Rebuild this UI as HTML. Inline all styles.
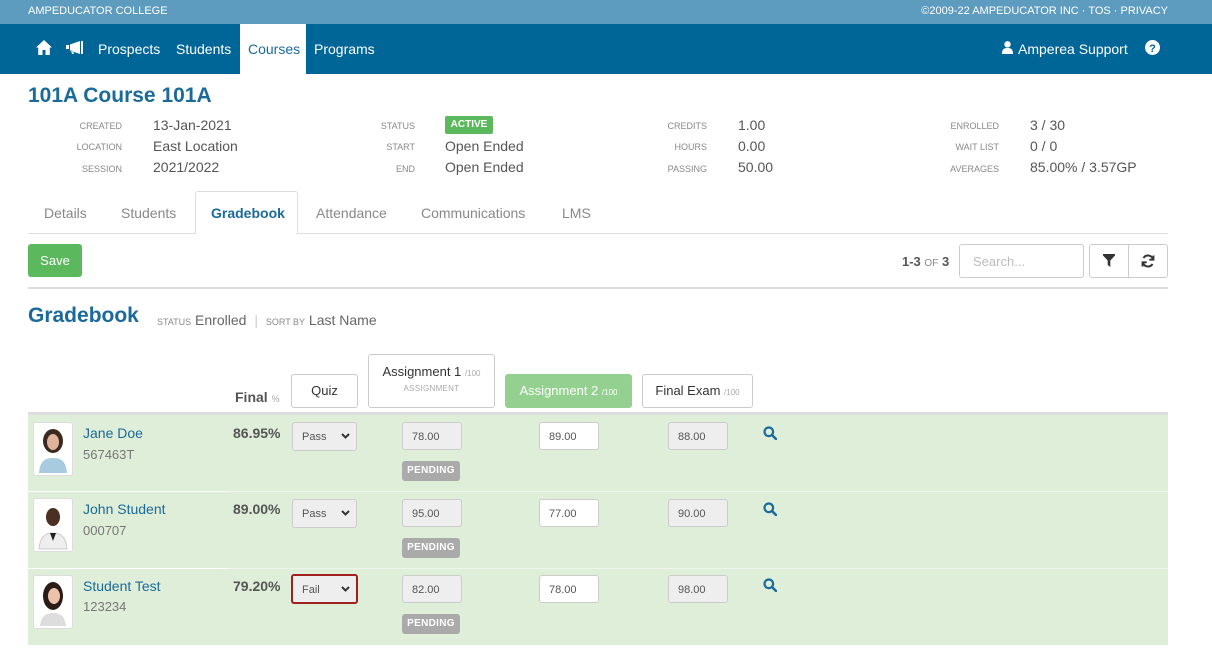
<!DOCTYPE html>
<html><head><meta charset="utf-8">
<style>
*{box-sizing:border-box;margin:0;padding:0}
body{width:1212px;height:670px;overflow:hidden;background:#fff;font-family:"Liberation Sans",sans-serif;color:#555;position:relative}
.a{position:absolute;white-space:nowrap}
.top{position:absolute;left:0;top:0;width:1212px;height:24px;background:#5d9bbf;color:#fff;font-size:11px}
.nav{position:absolute;left:0;top:24px;width:1212px;height:50px;background:#006597;color:#fff;font-size:14px}
.lbl{font-size:9px;color:#888;text-align:right;width:80px}
.val{font-size:14px;color:#555}
.tab{font-size:14px;color:#888;top:205px}
.in{position:absolute;height:28px;border:1px solid #ccc;border-radius:3px;font-size:11px;color:#555;padding:8px 0 0 9px;background:#eee}
.w{background:#fff}
.pend{position:absolute;width:58px;height:20px;background:#aaa;color:#fff;font-size:10px;font-weight:bold;text-align:center;line-height:20px;border-radius:3px;letter-spacing:.3px}
.hb{position:absolute;border:1px solid #ccc;border-radius:3px;background:#fff;font-size:13px;color:#333;text-align:center}
.av{position:absolute;left:33px;width:40px;height:54px;border:1px solid #ddd;border-radius:3px;background:#fff}
.nm{font-size:14px;color:#1a6a9a}
.id{font-size:13px;color:#777}
.fin{font-size:14px;font-weight:bold;color:#555}
.chev{position:absolute;right:6px;top:10px}
</style></head><body>
<div class="top"><span class="a" style="left:28px;top:5px">AMPEDUCATOR COLLEGE</span><span class="a" style="right:44px;top:5px">©2009-22 AMPEDUCATOR INC · TOS · PRIVACY</span></div>
<div class="nav">
<svg class="a" style="left:36px;top:16px" width="16" height="15" viewBox="0 0 16 15"><path d="M8 0L0 7.5h2.2V15h4.3v-5h3v5h4.3V7.5H16z" fill="#fff"/></svg>
<svg class="a" style="left:66px;top:17px" width="17" height="13" viewBox="0 0 17 13"><path d="M0 4h3v4H0zM4 3.5l10-3.5v13L4 9.5zM15 0h2v13h-2zM5 9.5l1 3.5h2l-1-3" fill="#fff"/></svg>
<span class="a" style="left:98px;top:17px">Prospects</span>
<span class="a" style="left:176px;top:17px">Students</span>
<div class="a" style="left:240px;top:0;width:66px;height:50px;background:#fff"></div>
<span class="a" style="left:248px;top:17px;color:#1a6a9a">Courses</span>
<span class="a" style="left:314px;top:17px">Programs</span>
<svg class="a" style="left:1002px;top:17px" width="11" height="13" viewBox="0 0 11 13"><circle cx="5.5" cy="3.3" r="3.2" fill="#fff"/><path d="M0 13c0-5 2-6 5.5-6s5.5 1 5.5 6z" fill="#fff"/></svg>
<span class="a" style="left:1018px;top:17px">Amperea Support</span>
<svg class="a" style="left:1145px;top:16px" width="15" height="15" viewBox="0 0 15 15"><circle cx="7.5" cy="7.5" r="7.5" fill="#fff"/><text x="7.5" y="12" font-size="11" font-weight="bold" fill="#006597" text-anchor="middle" font-family="Liberation Sans">?</text></svg>
</div>
<div class="a" style="left:28px;top:84px;font-size:21px;font-weight:bold;color:#1a6a9a">101A Course 101A</div>

<div class="a lbl" style="left:42px;top:121px">CREATED</div><div class="a val" style="left:153px;top:117px">13-Jan-2021</div>
<div class="a lbl" style="left:42px;top:142px">LOCATION</div><div class="a val" style="left:153px;top:138px">East Location</div>
<div class="a lbl" style="left:42px;top:164px">SESSION</div><div class="a val" style="left:153px;top:159px">2021/2022</div>

<div class="a lbl" style="left:335px;top:121px">STATUS</div><div class="a" style="left:445px;top:116px;width:48px;height:18px;background:#5cb85c;color:#fff;font-size:10px;font-weight:bold;text-align:center;line-height:18px;border-radius:2px">ACTIVE</div>
<div class="a lbl" style="left:335px;top:142px">START</div><div class="a val" style="left:445px;top:138px">Open Ended</div>
<div class="a lbl" style="left:335px;top:164px">END</div><div class="a val" style="left:445px;top:159px">Open Ended</div>

<div class="a lbl" style="left:627px;top:121px">CREDITS</div><div class="a val" style="left:738px;top:117px">1.00</div>
<div class="a lbl" style="left:627px;top:142px">HOURS</div><div class="a val" style="left:738px;top:138px">0.00</div>
<div class="a lbl" style="left:627px;top:164px">PASSING</div><div class="a val" style="left:738px;top:159px">50.00</div>

<div class="a lbl" style="left:919px;top:121px">ENROLLED</div><div class="a val" style="left:1030px;top:117px">3 / 30</div>
<div class="a lbl" style="left:919px;top:142px">WAIT LIST</div><div class="a val" style="left:1030px;top:138px">0 / 0</div>
<div class="a lbl" style="left:919px;top:164px">AVERAGES</div><div class="a val" style="left:1030px;top:159px">85.00% / 3.57GP</div>

<div class="a" style="left:28px;top:233px;width:1140px;height:1px;background:#ddd"></div>
<div class="a" style="left:195px;top:191px;width:103px;height:43px;border:1px solid #ddd;border-bottom:none;background:#fff;border-radius:3px 3px 0 0"></div>
<span class="a tab" style="left:44px">Details</span>
<span class="a tab" style="left:121px">Students</span>
<span class="a tab" style="left:211px;color:#1a6a9a;font-weight:bold">Gradebook</span>
<span class="a tab" style="left:316px">Attendance</span>
<span class="a tab" style="left:421px">Communications</span>
<span class="a tab" style="left:562px">LMS</span>

<div class="a" style="left:28px;top:244px;width:54px;height:33px;background:#5cb85c;border-radius:3px;color:#fff;font-size:13px;text-align:center;line-height:33px">Save</div>
<div class="a" style="left:902px;top:254px;font-size:13px;color:#555"><b>1-3</b> <span style="font-size:10px;color:#888">OF</span> <b>3</b></div>
<div class="a" style="left:959px;top:244px;width:125px;height:34px;border:1px solid #ccc;border-radius:3px;font-size:13px;color:#bbb;padding:9px 0 0 13px">Search...</div>
<div class="a" style="left:1089px;top:244px;width:79px;height:34px;border:1px solid #ccc;border-radius:3px"></div>
<div class="a" style="left:1128px;top:244px;width:1px;height:34px;background:#ccc"></div>
<svg class="a" style="left:1103px;top:254px" width="12" height="13" viewBox="0 0 12 13"><path d="M0 0h12v1.5L7.3 6.5V13L4.7 11V6.5L0 1.5z" fill="#333"/></svg>
<svg class="a" style="left:1141px;top:254px" width="14" height="14" viewBox="0 0 14 14" fill="none" stroke="#333" stroke-width="2"><path d="M12 5.5A5.2 5.2 0 0 0 2.5 4M2 8.5A5.2 5.2 0 0 0 11.5 10"/><path d="M12.5 1.5v4.2H8.3M1.5 12.5V8.3h4.2" stroke-width="1.8"/></svg>
<div class="a" style="left:28px;top:287px;width:1140px;height:2px;background:#ddd"></div>

<div class="a" style="left:28px;top:304px;font-size:21px;font-weight:bold;color:#1a6a9a">Gradebook</div>
<div class="a" style="left:157px;top:312px;font-size:14px;color:#666"><span style="font-size:9px;color:#888">STATUS</span> Enrolled <span style="color:#ccc;margin:0 4px">|</span> <span style="font-size:9px;color:#888">SORT BY</span> Last Name</div>

<div class="a" style="left:235px;top:389px;font-size:14px;font-weight:bold;color:#555">Final <span style="font-size:9px;color:#aaa;font-weight:normal">%</span></div>
<div class="hb" style="left:291px;top:374px;width:67px;height:34px;line-height:32px">Quiz</div>
<div class="hb" style="left:368px;top:354px;width:127px;height:54px;padding-top:9px">Assignment 1 <span style="font-size:8px;color:#aaa">/100</span><div style="font-size:8px;color:#aaa;margin-top:5px;letter-spacing:.3px">ASSIGNMENT</div></div>
<div class="hb" style="left:505px;top:374px;width:127px;height:34px;line-height:32px;background:#94d190;border-color:#94d190;color:#fff">Assignment 2 <span style="font-size:8px">/100</span></div>
<div class="hb" style="left:642px;top:374px;width:111px;height:34px;line-height:32px">Final Exam <span style="font-size:8px;color:#aaa">/100</span></div>
<div class="a" style="left:28px;top:412px;width:1140px;height:3px;background:#ddd"></div>

<div class="a" style="left:28px;top:415px;width:1140px;height:230px;background:#dfeed9"></div>
<div class="a" style="left:28px;top:491px;width:1140px;height:1px;background:#eef5ea"></div>
<div class="a" style="left:28px;top:491px;width:200px;height:1px;background:#fff"></div>
<div class="a" style="left:28px;top:568px;width:1140px;height:1px;background:#eef5ea"></div>
<div class="a" style="left:28px;top:568px;width:200px;height:1px;background:#fff"></div>

<div class="av" style="top:422px"><svg width="38" height="52" viewBox="0 0 38 52"><ellipse cx="19" cy="18" rx="10" ry="12" fill="#3a2a20"/><ellipse cx="19" cy="19" rx="6" ry="8" fill="#e0b49a"/><path d="M5 50c1-12 6-15 14-15s13 3 14 15z" fill="#a8cbe0"/></svg></div>
<div class="a nm" style="left:83px;top:425px">Jane Doe</div><div class="a id" style="left:83px;top:447px">567463T</div>
<div class="a fin" style="left:233px;top:425px">86.95%</div>
<div class="in" style="left:292px;top:422px;width:65px;height:29px">Pass<svg class="chev" width="9" height="6" viewBox="0 0 9 6"><path d="M1 1l3.5 3.5L8 1" fill="none" stroke="#333" stroke-width="2"/></svg></div>
<div class="in" style="left:402px;top:422px;width:60px">78.00</div>
<div class="pend" style="left:402px;top:461px">PENDING</div>
<div class="in w" style="left:539px;top:422px;width:60px">89.00</div>
<div class="in" style="left:668px;top:422px;width:60px">88.00</div>

<div class="av" style="top:498px"><svg width="38" height="52" viewBox="0 0 38 52"><ellipse cx="19" cy="18" rx="7" ry="9" fill="#4a2f22"/><path d="M5 50c1-12 6-16 14-16s13 4 14 16z" fill="#eee" stroke="#ccc"/><path d="M16 34l3 8 3-8z" fill="#222"/></svg></div>
<div class="a nm" style="left:83px;top:501px">John Student</div><div class="a id" style="left:83px;top:523px">000707</div>
<div class="a fin" style="left:233px;top:501px">89.00%</div>
<div class="in" style="left:292px;top:499px;width:65px;height:29px">Pass<svg class="chev" width="9" height="6" viewBox="0 0 9 6"><path d="M1 1l3.5 3.5L8 1" fill="none" stroke="#333" stroke-width="2"/></svg></div>
<div class="in" style="left:402px;top:499px;width:60px">95.00</div>
<div class="pend" style="left:402px;top:538px">PENDING</div>
<div class="in w" style="left:539px;top:499px;width:60px">77.00</div>
<div class="in" style="left:668px;top:499px;width:60px">90.00</div>

<div class="av" style="top:575px"><svg width="38" height="52" viewBox="0 0 38 52"><ellipse cx="19" cy="20" rx="10" ry="14" fill="#2a1c16"/><ellipse cx="20" cy="20" rx="6" ry="8" fill="#ecc3a8"/><path d="M6 50c1-10 6-13 13-13s12 3 13 13z" fill="#ddd"/></svg></div>
<div class="a nm" style="left:83px;top:578px">Student Test</div><div class="a id" style="left:83px;top:599px">123234</div>
<div class="a fin" style="left:233px;top:578px">79.20%</div>
<div class="in" style="left:291px;top:574px;width:67px;height:30px;border:2px solid #a02020">Fail<svg class="chev" width="9" height="6" viewBox="0 0 9 6"><path d="M1 1l3.5 3.5L8 1" fill="none" stroke="#333" stroke-width="2"/></svg></div>
<div class="in" style="left:402px;top:575px;width:60px">82.00</div>
<div class="pend" style="left:402px;top:614px">PENDING</div>
<div class="in w" style="left:539px;top:575px;width:60px">78.00</div>
<div class="in" style="left:668px;top:575px;width:60px">98.00</div>

<svg class="a" style="left:763px;top:426px" width="14" height="14" viewBox="0 0 14 14"><circle cx="5.8" cy="5.8" r="4.3" fill="none" stroke="#1a6a9a" stroke-width="2.2"/><path d="M9 9l4 4" stroke="#1a6a9a" stroke-width="2.6" stroke-linecap="round"/></svg>
<svg class="a" style="left:763px;top:502px" width="14" height="14" viewBox="0 0 14 14"><circle cx="5.8" cy="5.8" r="4.3" fill="none" stroke="#1a6a9a" stroke-width="2.2"/><path d="M9 9l4 4" stroke="#1a6a9a" stroke-width="2.6" stroke-linecap="round"/></svg>
<svg class="a" style="left:763px;top:578px" width="14" height="14" viewBox="0 0 14 14"><circle cx="5.8" cy="5.8" r="4.3" fill="none" stroke="#1a6a9a" stroke-width="2.2"/><path d="M9 9l4 4" stroke="#1a6a9a" stroke-width="2.6" stroke-linecap="round"/></svg>
</body></html>
